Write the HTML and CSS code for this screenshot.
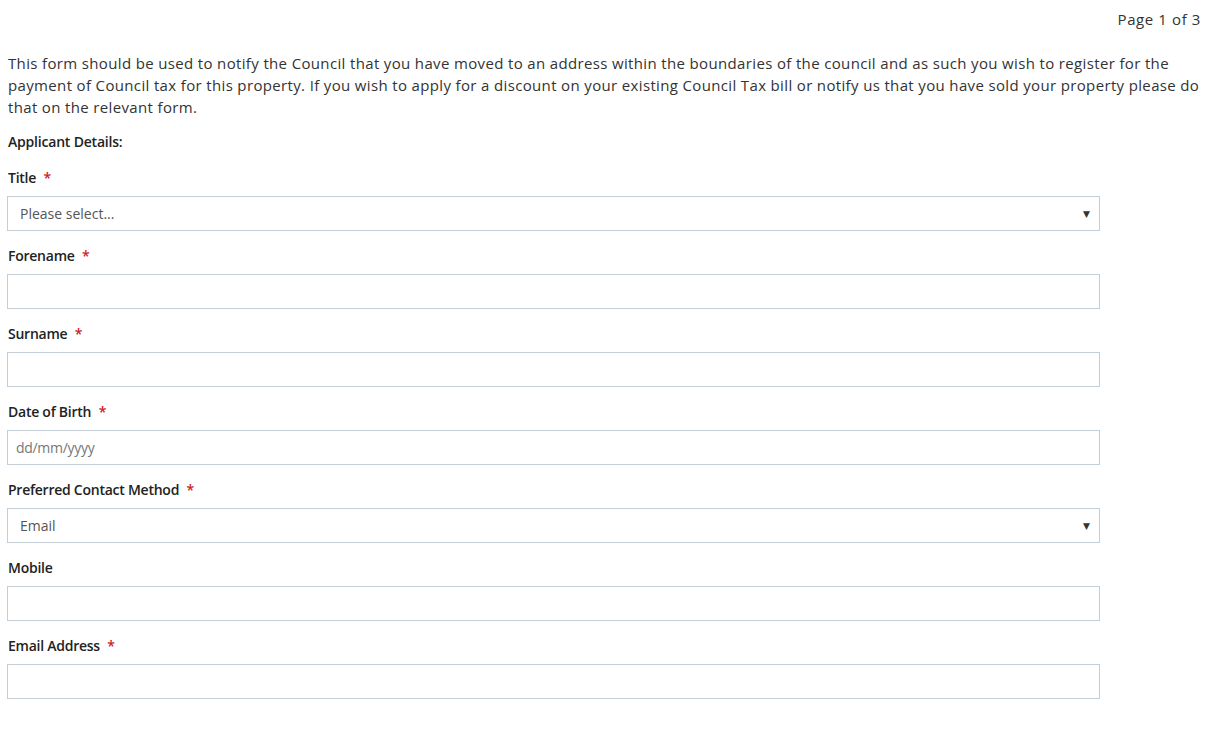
FILE: index.html
```html
<!DOCTYPE html>
<html lang="en">
<head>
<meta charset="utf-8">
<title>Council Tax Registration</title>
<link rel="stylesheet" href="styles.css">
</head>
<body>
<div class="page">
  <div class="pager">Page 1 of 3</div>
  <p class="intro">This form should be used to notify the Council that you have moved to an address within the boundaries of the council and as such you wish to register for the payment of Council tax for this property. If you wish to apply for a discount on your existing Council Tax bill or notify us that you have sold your property please do that on the relevant form.</p>
  <div class="section-title">Applicant Details:</div>
  <form class="form">
    <div class="field">
      <label class="label">Title <span class="req">*</span></label>
      <div class="control select"><span class="sel-text">Please select...</span><span class="arrow">▼</span></div>
    </div>
    <div class="field">
      <label class="label">Forename <span class="req">*</span></label>
      <div class="control"></div>
    </div>
    <div class="field">
      <label class="label">Surname <span class="req">*</span></label>
      <div class="control"></div>
    </div>
    <div class="field">
      <label class="label">Date of Birth <span class="req">*</span></label>
      <div class="control text"><span class="placeholder">dd/mm/yyyy</span></div>
    </div>
    <div class="field">
      <label class="label">Preferred Contact Method <span class="req">*</span></label>
      <div class="control select"><span class="sel-text">Email</span><span class="arrow">▼</span></div>
    </div>
    <div class="field">
      <label class="label">Mobile</label>
      <div class="control"></div>
    </div>
    <div class="field">
      <label class="label">Email Address <span class="req">*</span></label>
      <div class="control"></div>
    </div>
  </form>
</div>
</body>
</html>
```

FILE: styles.css
```css
* { box-sizing: border-box; }
html, body { margin: 0; padding: 0; background: #fff; }
body {
  font-family: "Open Sans", "Noto Sans", Arial, sans-serif;
  color: #333;
}
.page {
  padding: 8px 8px 0 8px;
}
.pager {
  text-align: right;
  font-size: 15px;
  line-height: 22px;
  padding-right: 10px;
  letter-spacing: 0.6px;
  color: #333;
}
.intro {
  margin: 22px 0 0 0;
  font-size: 15px;
  line-height: 22px;
  letter-spacing: 0.35px;
  color: #333;
}
.section-title {
  margin-top: 14px;
  font-size: 14px;
  line-height: 20px;
  font-weight: 600;
  letter-spacing: -0.2px;
  color: #222;
}
.form {
  margin-top: 16px;
  margin-left: -1px;
}
.field {
  margin-bottom: 15px;
}
.label {
  display: block;
  font-size: 14px;
  line-height: 20px;
  font-weight: 600;
  letter-spacing: -0.25px;
  color: #222;
  margin-bottom: 8px;
  padding-left: 1px;
}
.req {
  color: #d0202a;
  margin-left: 4px;
}
.control {
  width: 1093px;
  height: 35px;
  border: 1px solid #c3ced6;
  background: #fff;
  display: flex;
  align-items: center;
  font-size: 14px;
}
.control.select {
  padding: 0 9px 0 12px;
  justify-content: space-between;
}
.control.text {
  padding: 0 8px;
}
.sel-text { color: #555; }
.placeholder { color: #777; letter-spacing: -0.3px; }
.arrow {
  font-size: 9px;
  color: #333;
  font-family: "DejaVu Sans", sans-serif;
}
```
